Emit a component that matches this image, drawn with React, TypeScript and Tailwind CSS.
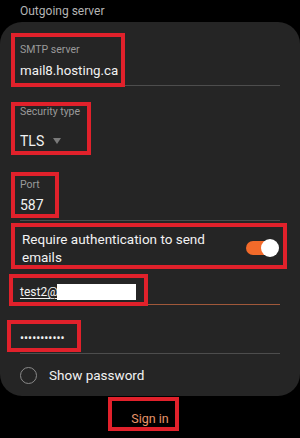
import React from 'react';

// red annotation boxes drawn over the screenshot
const marks = [
  { left: 11, top: 33, width: 114, height: 54 },
  { left: 11, top: 102, width: 80, height: 53 },
  { left: 11, top: 172, width: 48, height: 46 },
  { left: 11, top: 223, width: 276, height: 46 },
  { left: 9, top: 274, width: 139, height: 32 },
  { left: 7, top: 320, width: 74, height: 32 },
  { left: 108, top: 397, width: 71, height: 34 },
];

export default function App() {
  return (
    <div
      className="relative w-[300px] h-[438px] overflow-hidden bg-black"
      style={{ fontFamily: 'Roboto, "Noto Sans", sans-serif' }}
    >
      <div className="h-[22px] pl-5 text-[12px] leading-[22px] text-[#b4b4b4]">Outgoing server</div>

      <div className="rounded-[22px] bg-[#252525] px-5 h-[374px]">
        {/* SMTP */}
        <div className="h-[64px] border-b border-[#4d4d4d] pt-[21px]">
          <div className="text-[10.5px] leading-[14px] text-[#9a9a9a]">SMTP server</div>
          <div className="mt-[4px] text-[13.3px] leading-[20px] text-[#f2f2f2]">mail8.hosting.ca</div>
        </div>

        {/* Security */}
        <div className="h-[69px] pt-[19px]">
          <div className="text-[10.5px] leading-[14px] text-[#9a9a9a]">Security type</div>
          <div className="mt-[12px] flex items-center gap-[9px] text-[14px] leading-[20px] text-[#f2f2f2]">
            <span>TLS</span>
            <span className="block w-0 h-0 border-l-[4px] border-r-[4px] border-t-[6px] border-l-transparent border-r-transparent border-t-[#7a7a7a]" />
          </div>
        </div>

        {/* Port */}
        <div className="h-[66px] border-b border-[#4d4d4d] pt-[23px]">
          <div className="text-[10.5px] leading-[14px] text-[#9a9a9a]">Port</div>
          <div className="mt-[3px] text-[14px] leading-[20px] text-[#f2f2f2]">587</div>
        </div>

        {/* Require auth */}
        <div className="h-[48px] flex items-center justify-between pt-[6px]">
          <div className="text-[13.5px] leading-[18px] text-[#f2f2f2] pl-[2px]">
            Require authentication to send
            <br />
            emails
          </div>
          <div className="relative w-[30px] h-[14px] mr-[4px] rounded-full bg-[#f26a2a]">
            <span className="absolute right-[-3px] top-[-2px] w-[18px] h-[18px] rounded-full bg-white" />
          </div>
        </div>

        {/* Email */}
        <div className="h-[36px] border-b border-[#a0583a] flex items-end pb-[3px]">
          <span className="text-[12px] leading-[18px] text-[#f2f2f2] underline decoration-1 underline-offset-2">test2@</span>
          <span className="ml-[-1px] mb-[1px] block w-[79px] h-[16px] bg-white" />
        </div>

        {/* Password */}
        <div className="h-[49px] border-b border-[#4d4d4d] flex items-end pb-[5px]">
          <span className="text-[12px] leading-[20px] text-[#f2f2f2]">•••••••••••</span>
        </div>

        {/* Show password */}
        <div className="flex items-center gap-[12px] pt-[12px]">
          <span className="block w-[17px] h-[17px] rounded-full border border-[#8a8a8a]" />
          <span className="text-[13.5px] leading-[18px] text-[#f2f2f2]">Show password</span>
        </div>
      </div>

      <div className="flex justify-center pt-[14px]">
        <span className="text-[12.5px] leading-[18px] text-[#e8956b]">Sign in</span>
      </div>

      {marks.map((m, i) => (
        <div
          key={i}
          className="absolute border-[4px] border-[#e1212b]"
          style={{ left: m.left, top: m.top, width: m.width, height: m.height }}
        />
      ))}
    </div>
  );
}
